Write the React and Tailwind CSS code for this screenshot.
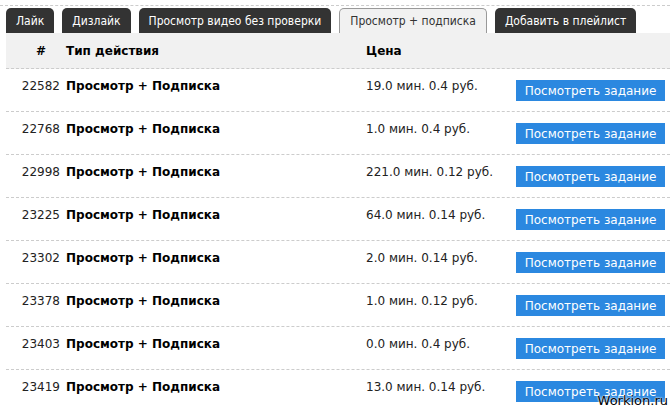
import React from "react";

const tabs = [
  { label: "Лайк" },
  { label: "Дизлайк" },
  { label: "Просмотр видео без проверки" },
  { label: "Просмотр + подписка", active: true },
  { label: "Добавить в плейлист" },
];

const rows = [
  { id: 22582, price: "19.0 мин. 0.4 руб." },
  { id: 22768, price: "1.0 мин. 0.4 руб." },
  { id: 22998, price: "221.0 мин. 0.12 руб." },
  { id: 23225, price: "64.0 мин. 0.14 руб." },
  { id: 23302, price: "2.0 мин. 0.14 руб." },
  { id: 23378, price: "1.0 мин. 0.12 руб." },
  { id: 23403, price: "0.0 мин. 0.4 руб." },
  { id: 23419, price: "13.0 мин. 0.14 руб." },
];

export default function App() {
  return (
    <div
      className="relative w-[670px] h-[411px] overflow-hidden bg-white text-[#222] text-[12px]"
      style={{ fontFamily: '"DejaVu Sans", Verdana, sans-serif' }}
    >
      {/* Tabs */}
      <div
        className="mt-[5px] border-t border-dashed border-[#ccc] pt-[2px] pl-[6px] flex gap-[8px] items-end"
        style={{ fontFamily: '"DejaVu Sans Condensed", "DejaVu Sans", sans-serif' }}
      >
        {tabs.map((t) =>
          t.active ? (
            <div
              key={t.label}
              className="h-[25px] px-[10px] flex items-center whitespace-nowrap rounded-t-[5px] border border-b-0 border-[#999] bg-[#f1f1f1] text-[#333] text-[12px]"
            >
              {t.label}
            </div>
          ) : (
            <div
              key={t.label}
              className="h-[25px] px-[10px] flex items-center whitespace-nowrap rounded-t-[5px] bg-[#333] text-white text-[12px]"
            >
              {t.label}
            </div>
          )
        )}
      </div>

      {/* Table */}
      <div className="ml-[6px]">
        <div className="h-[36px] flex items-center bg-[#f1f1f1] border-b border-dashed border-[#ccc] font-bold text-black">
          <div className="w-[60px] text-right pr-[20px]">#</div>
          <div className="w-[300px]">Тип действия</div>
          <div className="w-[150px]">Цена</div>
        </div>
        {rows.map((r) => (
          <div key={r.id} className="h-[43px] flex items-start border-b border-dashed border-[#ccc]">
            <div className="w-[54px] text-right pt-[9px] leading-[16px]">{r.id}</div>
            <div className="w-[306px] pl-[6px] pt-[9px] leading-[16px] font-bold text-black whitespace-nowrap">Просмотр + Подписка</div>
            <div className="w-[150px] pt-[9px] leading-[16px] whitespace-nowrap">{r.price}</div>
            <button
              type="button"
              className="mt-[11px] w-[149px] h-[21px] bg-[#2b88e0] text-white text-[12px] flex items-center justify-center whitespace-nowrap"
            >
              Посмотреть задание
            </button>
          </div>
        ))}
      </div>

      <div
        className="absolute right-[2px] bottom-[1px] text-[13px] text-black"
        style={{ textShadow: "0 0 2px #fff, 0 0 2px #fff" }}
      >
        Workion.ru
      </div>
    </div>
  );
}
